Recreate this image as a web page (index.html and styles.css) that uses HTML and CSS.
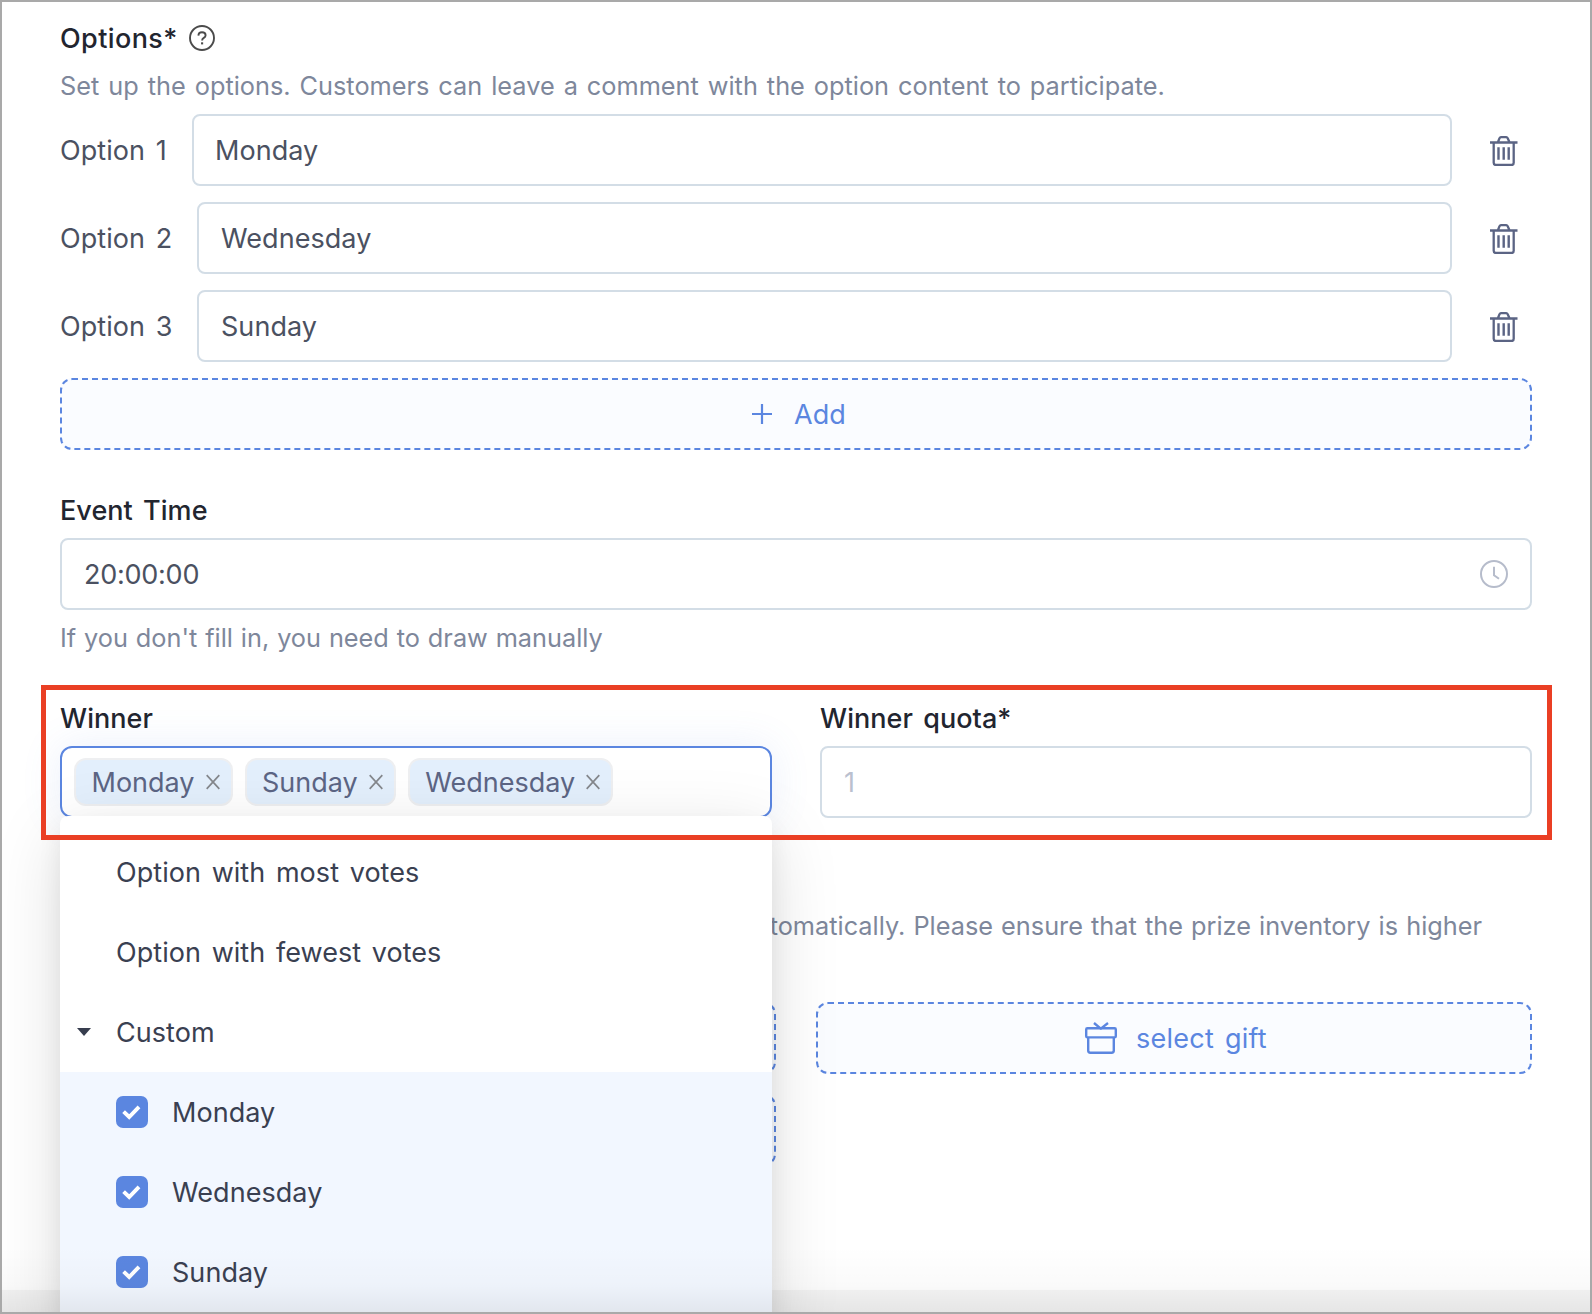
FILE: index.html
```
<!DOCTYPE html>
<html lang="en">
<head>
  <meta charset="UTF-8">
  <meta name="viewport" content="width=device-width, initial-scale=1.0">
  <title>Event Settings</title>
  <link rel="stylesheet" href="styles.css">
</head>
<body>
<svg class="sprite" width="0" height="0">
  <symbol id="icon-trash" viewBox="0 0 28 30">
    <path d="M0 6.5H27.5M8 6L9.5 2.2Q10 1.2 11 1.2H16.2Q17.2 1.2 17.7 2.2L19.4 6M3.7 7V26.7Q3.7 29 6 29H21.5Q23.7 29 23.7 26.7V7" fill="none" stroke="currentColor" stroke-width="2.3"/>
    <path d="M8.5 11.2V23.8M13.7 11.2V23.8M18.7 11.2V23.8" fill="none" stroke="currentColor" stroke-width="2.4"/>
  </symbol>
  <symbol id="icon-close" viewBox="0 0 14 16">
    <path d="M.7 1.2L13.3 14.8M13.3 1.2L.7 14.8" fill="none" stroke="currentColor" stroke-width="1.7"/>
  </symbol>
  <symbol id="icon-check" viewBox="0 0 32 32">
    <path d="M7.6 15.6L13.2 21L23 10.8" fill="none" stroke="currentColor" stroke-width="3.9"/>
  </symbol>
</svg>

<div class="page">
  <section class="options">
    <h3 class="label">
      <span class="options-title">Options*</span>
      <svg class="help" width="26" height="26" viewBox="0 0 26 26" fill="none" stroke="currentColor" stroke-width="1.9">
        <circle cx="13" cy="13" r="12"/>
        <path d="M9.4 10.6Q9.5 7.2 13 7.2Q16.6 7.2 16.6 10.2Q16.6 11.8 14.8 12.9Q13.1 13.9 13.1 15.6"/>
        <path d="M13.1 17.3V19.4" stroke-width="2.1"/>
      </svg>
    </h3>
    <p class="hint">Set up the options. Customers can leave a comment with the option content to participate.</p>
    <div class="option-row">
      <span class="option-name option-first">Option 1</span>
      <div class="input">Monday</div>
      <svg class="trash" width="28" height="30"><use href="#icon-trash"/></svg>
    </div>
    <div class="option-row">
      <span class="option-name">Option 2</span>
      <div class="input">Wednesday</div>
      <svg class="trash" width="28" height="30"><use href="#icon-trash"/></svg>
    </div>
    <div class="option-row">
      <span class="option-name">Option 3</span>
      <div class="input">Sunday</div>
      <svg class="trash" width="28" height="30"><use href="#icon-trash"/></svg>
    </div>
    <div class="dashed-btn btn-add">
      <svg width="20" height="20" viewBox="0 0 20 20"><path d="M0 10H20M10 0V20" stroke="currentColor" stroke-width="2.2"/></svg>
      <span>Add</span>
    </div>
  </section>

  <section class="event-time">
    <h3 class="label">Event Time</h3>
    <div class="input input-time">
      <span class="time">20:00:00</span>
      <svg width="28" height="28" viewBox="0 0 28 28" fill="none" stroke="currentColor" stroke-width="2">
        <circle cx="14" cy="14" r="13"/>
        <path d="M14 6.8V15.2L19 18.8"/>
      </svg>
    </div>
    <p class="hint">If you don't fill in, you need to draw manually</p>
  </section>

  <section class="winner-row">
    <div class="field">
      <h3 class="label">Winner</h3>
      <div class="select">
        <span class="tag">Monday <svg width="14" height="16"><use href="#icon-close"/></svg></span>
        <span class="tag">Sunday <svg width="14" height="16"><use href="#icon-close"/></svg></span>
        <span class="tag">Wednesday <svg width="14" height="16"><use href="#icon-close"/></svg></span>
      </div>
      <div class="dropdown">
        <div class="item">Option with most votes</div>
        <div class="item">Option with fewest votes</div>
        <div class="item item-custom"><span class="caret"></span>Custom</div>
        <div class="item checked"><svg class="checkbox" width="32" height="32"><use href="#icon-check"/></svg>Monday</div>
        <div class="item checked"><svg class="checkbox" width="32" height="32"><use href="#icon-check"/></svg>Wednesday</div>
        <div class="item checked"><svg class="checkbox" width="32" height="32"><use href="#icon-check"/></svg>Sunday</div>
      </div>
    </div>
    <div class="field">
      <h3 class="label">Winner quota*</h3>
      <div class="input placeholder">1</div>
    </div>
    <div class="highlight"></div>
  </section>

  <section class="prizes">
    <p class="hint">automatically. Please ensure that the prize inventory is higher</p>
    <div class="gift-grid">
      <div class="dashed-btn"></div>
      <div class="dashed-btn btn-gift">
        <svg class="gift" width="32" height="32" viewBox="0 0 32 32" fill="none" stroke="currentColor" stroke-width="2.4" stroke-linejoin="round">
          <rect x="1.2" y="6.2" width="29.6" height="9.2" rx="1.2"/>
          <path d="M3.2 15.5V28.6Q3.2 30.8 5.4 30.8H26.6Q28.8 30.8 28.8 28.6V15.5M9 1L15.8 6.6L23 1"/>
        </svg>
        <span class="gift-text">select gift</span>
      </div>
      <div class="dashed-btn"></div>
    </div>
  </section>

  <div class="bottom-bar"></div>
  <div class="bottom-fade"></div>
</div>
</body>
</html>
```
FILE: styles.css
```
* {
  box-sizing: border-box;
}

body {
  margin: 0;
  font-family: Inter, "Liberation Sans", sans-serif;
  font-size: 27px;
  letter-spacing: 0.05px;
  word-spacing: 3px;
  color: #4b5161;
  background-color: #fff;
}

.page {
  position: relative;
  height: 1314px;
  padding: 16px 58px 0;
  border: 2px solid #a9a9a9;
  overflow: hidden;
}

.sprite {
  position: absolute;
}

.label {
  display: flex;
  align-items: center;
  margin: 0;
  height: 40px;
  font-size: 27px;
  font-weight: 500;
  color: #22252f;
}

.options-title {
  letter-spacing: 0.4px;
}

.help {
  margin-left: 11px;
  color: #4b4b4b;
}

.hint {
  margin: 0;
  font-size: 25.3px;
  line-height: 40px;
  letter-spacing: 0;
  word-spacing: 1px;
  color: #7e879b;
  white-space: nowrap;
}

.options .hint {
  margin: 8px 0;
  word-spacing: 1.9px;
}

.option-row {
  display: flex;
  align-items: center;
  margin-bottom: 16px;
}

.option-name {
  width: 137px;
}

.option-first {
  width: 132px;
}

.input {
  display: flex;
  align-items: center;
  flex: 1;
  height: 72px;
  padding: 0 22px;
  border: 2px solid #d3dde6;
  border-radius: 8px;
  background-color: #fff;
}

.option-first + .input {
  padding-left: 21px;
}

.trash {
  margin: 2px 14px 0 38px;
  color: #5b6484;
}

.dashed-btn {
  display: flex;
  align-items: center;
  justify-content: center;
  height: 72px;
  border: 2px dashed #5b86e0;
  border-radius: 12px;
  background-color: #fafcff;
  color: #5b86e0;
}

.btn-add {
  gap: 22px;
  padding-left: 6px;
}

.event-time {
  margin-top: 40px;
}

.event-time .hint {
  word-spacing: 0.8px;
}

.time {
  letter-spacing: -0.25px;
}

.input-time {
  justify-content: space-between;
  margin: 8px 0;
}

.input-time svg {
  color: #b6bccb;
}

.winner-row {
  position: relative;
  display: grid;
  grid-template-columns: 1fr 1fr;
  gap: 48px;
  margin-top: 40px;
}

.field {
  position: relative;
}

.field .label {
  margin-bottom: 8px;
}

.placeholder {
  color: #bac0cf;
}

.select {
  display: flex;
  align-items: center;
  gap: 12px;
  height: 72px;
  padding: 0 12px;
  border: 2px solid #5b86e0;
  border-radius: 12px;
  box-shadow: 0 0 40px rgba(91, 134, 224, 0.12);
}

.tag {
  display: flex;
  align-items: center;
  gap: 11px;
  height: 48px;
  padding: 0 11px 0 15.5px;
  border: 2px solid #eeeff1;
  border-radius: 12px;
  background-color: #e3effc;
  letter-spacing: 0;
  color: #5c6584;
}

.tag svg {
  color: #85888d;
}

.dropdown {
  position: absolute;
  top: 118px;
  left: 0;
  width: 100%;
  height: 520px;
  padding-top: 16px;
  border-radius: 8px;
  background-color: #fff;
  box-shadow: 0 12px 24px rgba(0, 0, 0, 0.07), 0 18px 70px rgba(0, 0, 0, 0.13);
  color: #3a4051;
  z-index: 2;
}

.item {
  display: flex;
  align-items: center;
  height: 80px;
  padding-left: 56px;
}

.item-custom {
  padding-left: 17px;
}

.caret {
  width: 14px;
  margin-right: 25px;
  border: 7px solid transparent;
  border-top: 8px solid #373d4e;
  border-bottom: 0;
}

.checked {
  background-color: #f2f7ff;
}

.checkbox {
  margin-right: 24px;
  border-radius: 7px;
  background-color: #5b86e0;
  color: #fff;
}

/* red frame around the winner fields */
.highlight {
  position: absolute;
  top: -13px;
  left: -19px;
  right: -20px;
  height: 155px;
  border: 5px solid #ea3f24;
  z-index: 3;
}

.prizes {
  margin-top: 88px;
}

.prizes .hint {
  width: 1422px;
  text-align: right;
}

.gift-grid {
  display: grid;
  grid-template-columns: 1fr 1fr;
  gap: 20px 40px;
  margin-top: 56px;
}

.btn-gift {
  padding-left: 4px;
}

.gift {
  margin-right: 19px;
}

.gift-text {
  letter-spacing: 0.25px;
}

.bottom-bar {
  position: absolute;
  left: 0;
  right: 0;
  bottom: 0;
  height: 22px;
  background-color: #f6f6f6;
  z-index: 1;
}

.bottom-fade {
  position: absolute;
  left: 0;
  right: 0;
  bottom: 0;
  height: 66px;
  background: linear-gradient(rgba(0, 0, 0, 0), rgba(0, 0, 0, 0.02) 60%, rgba(0, 0, 0, 0.065));
  z-index: 4;
}
```
